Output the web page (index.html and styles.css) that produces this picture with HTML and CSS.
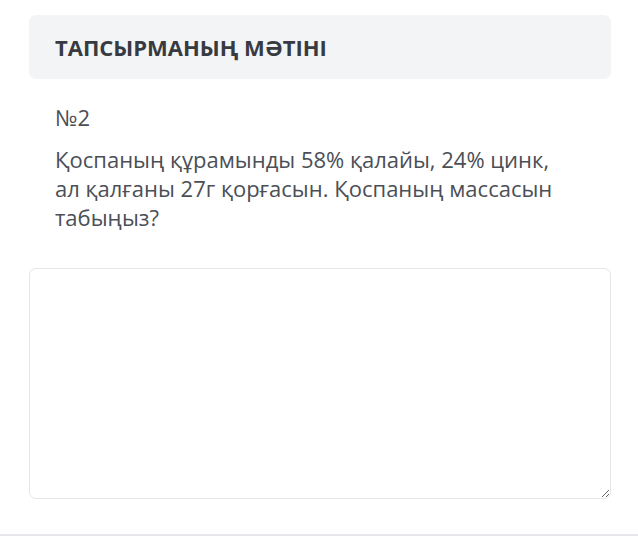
FILE: index.html
```html
<!DOCTYPE html>
<html lang="kk">
<head>
    <meta charset="UTF-8">
    <meta name="viewport" content="width=device-width, initial-scale=1.0">
    <title>Тапсырма</title>
    <link rel="stylesheet" href="styles.css">
</head>
<body>
    <div class="task">
        <div class="task-header">Тапсырманың мәтіні</div>

        <div class="task-body">
            <p class="task-number">№2</p>
            <p class="task-text">Қоспаның құрамынды 58% қалайы, 24% цинк, ал қалғаны 27г қорғасын. Қоспаның массасын табыңыз?</p>
        </div>

        <textarea class="answer-input"></textarea>
    </div>
    <div class="footer-line"></div>
</body>
</html>
```

FILE: styles.css
```css
body {
    margin: 0;
    font-family: "Open Sans", "Liberation Sans", sans-serif;
    background-color: #ffffff;
    color: #4b4f56;
}

.task {
    padding: 15px 27px 0 29px;
}

.task-header {
    background-color: #f3f4f6;
    border-radius: 7px;
    padding: 18px 26px;
    font-size: 22px;
    line-height: 28px;
    font-weight: bold;
    text-transform: uppercase;
    color: #373b41;
}

.task-body {
    padding: 24px 26px 0 26px;
    font-size: 22px;
    line-height: 29px;
}

.task-number {
    margin: 0 0 13px 0;
}

.task-text {
    margin: 0;
    max-width: 510px;
}

.answer-input {
    display: block;
    box-sizing: border-box;
    width: 100%;
    height: 231px;
    margin-top: 36px;
    border: 1px solid #e4e6ea;
    border-radius: 7px;
    padding: 10px 14px;
    font-family: inherit;
    font-size: 18px;
    resize: vertical;
    outline: none;
}

.footer-line {
    margin-top: 35px;
    height: 2px;
    background-color: #e6e7ea;
}
```
